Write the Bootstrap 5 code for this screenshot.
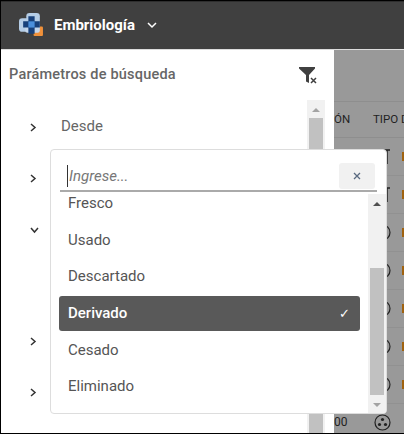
<!DOCTYPE html>
<html lang="es"><head><meta charset="utf-8"><title>Embriología</title>
<link href="https://cdn.jsdelivr.net/npm/bootstrap@5.3.0/dist/css/bootstrap.min.css" rel="stylesheet">
<style>
html,body{margin:0;height:434px;overflow:hidden;background:#fff;font-family:Roboto,"Liberation Sans",sans-serif}
.frame{width:404px;height:434px;border-top:1px solid #000;border-left:1px solid #000;border-bottom:1px solid #000;position:relative;overflow:hidden;display:flex;flex-direction:column}
.topbar{height:49px;background:#404040;flex:none;border-top:1px solid #2e2e2e;border-bottom:1px solid #ddd;padding-left:18px;color:#fff;font-weight:700;font-size:15px}
.topbar .brand{margin-left:10px;margin-right:12px}
.work{flex:1;min-height:0;display:flex}
.side{width:333px;flex:none;background:#fff;position:relative;overflow:hidden}
.side-head{height:50px;padding:0 15px 0 8px;color:#666;font-size:14.500px;font-weight:500;letter-spacing:.2px;margin-top:1px}
.tree{width:306px;flex:none;padding-top:3px}
.tree-row{height:51.300px;color:#666;font-size:15px;padding-left:29px}
.tree-row span{margin-left:24px;position:relative;top:-1px}
.tree-gap{height:59.700px}
.side-scroll{width:18px;background:#f1f1f1;margin-right:9px;display:flex;flex-direction:column;align-items:center;height:333px;margin-top:1px}
.side-thumb{width:14px;flex:1;background:#c1c1c1;margin-top:6px}
.arrow{width:0;height:0;border-left:4px solid transparent;border-right:4px solid transparent}
.arrow-up{border-bottom:4px solid #a3a3a3;margin-top:8px}
.arrow-up-d{border-bottom:4px solid #505050}
.arrow-down{border-top:4px solid #a3a3a3}
.grid-area{flex:1;background:#999;color:#222;font-size:11.500px;overflow:hidden}
.grid-top{height:52px;border-bottom:1px solid #8e8e8e}
.grid-head{height:36px;border-bottom:1px solid #8e8e8e;white-space:nowrap;gap:25px}
.grid-head span:first-child{width:15px}
.grid-head span:last-child{margin-left:-1px}
.grid-row{height:38px;border-bottom:1px solid #919191;padding-left:40px;position:relative}
.last-num{position:absolute;left:0;top:9px;font-size:12px;color:#222}
.dot{position:absolute;left:68px;top:14px;width:2px;height:9px;background:#a0620f}
.picker{position:absolute;left:49px;top:148px;width:337px;height:265px;background:#fff;border:1px solid #ddd;border-radius:4px;display:flex;flex-direction:column;overflow:hidden}
.picker-top{flex:none;height:42px;margin:0 9px;border-bottom:2px solid #aaa;padding:15px 2px 0 7px}
.picker-input{flex:1;border:0;outline:0;padding:0 0 0 1px;font-size:15px;font-style:italic;color:#777;border-left:1px solid #333;height:22px;min-width:0;background:transparent}
.picker-input::placeholder{color:#777;opacity:1}
.picker-clear{width:36px;height:26px;background:#f1f1f1;border:0;border-radius:3px;padding:0;margin-left:6px;margin-top:-2px;color:#555}
.picker-body{flex:1;min-height:0;display:flex}
.opts{flex:1;overflow:hidden;padding:0 8px;min-width:0}
.opt{height:36.670px;font-size:15px;color:#555;padding-left:9px}
.opt:first-child{margin-top:-7px}
.opt.sel{background:#595959;color:#fff;font-weight:500;border-radius:3px;height:35px;margin:.8px 0;padding-right:10px}
.check{font-size:13px}
.pick-scroll{width:18px;background:#f1f1f1;flex:none;display:flex;flex-direction:column;align-items:center;margin-top:2px}
.pick-thumb{width:14px;background:#c1c1c1;flex:1;margin:62px 0 8px}
.arrow-top-gap{margin-top:8px}
.arrow-bottom-gap{margin-bottom:6px}
</style></head><body>
<div class="frame">
<nav class="topbar d-flex align-items-center">
<svg width="25" height="25" viewBox="0 0 24 24"><rect x="14" y="13" width="9" height="9" rx="1" fill="#f0913a"/><rect x="0" y="5" width="14" height="13" rx="3" fill="#b5cde6"/><rect x="7" y="0" width="13" height="14" rx="3" fill="#b5cde6"/><rect x="6" y="9" width="14" height="10" rx="2" fill="#c3d5ea"/><path d="M9 3h6v5h5v6h-5v6H9v-6H4V8h5z" fill="#17407a"/><rect x="9" y="8" width="6" height="6" fill="#4a8fdc"/></svg>
<span class="brand">Embriología</span>
<svg width="10" height="7" viewBox="0 0 10 7"><path d="M1 1l4 4 4-4" fill="none" stroke="#fff" stroke-width="1.500"/></svg>
</nav>
<div class="work">
<aside class="side d-flex flex-column">
<div class="side-head d-flex align-items-center justify-content-between"><span>Parámetros de búsqueda</span>
<svg width="20" height="18" viewBox="0 0 20 18"><path d="M0 1h16v1.500L10 9v8l-3-1.500V9L0 2.500z" fill="#404040"/><path d="M12 12l5 5M17 12l-5 5" stroke="#404040" stroke-width="1.500"/></svg></div>
<div class="d-flex justify-content-between flex-grow-1">
<div class="tree">
<div class="tree-row d-flex align-items-center"><svg width="7" height="9" viewBox="0 0 7 9"><path d="M1 1l4 3.500L1 8" fill="none" stroke="#333" stroke-width="1.500"/></svg><span>Desde</span></div>
<div class="tree-row d-flex align-items-center"><svg width="7" height="9" viewBox="0 0 7 9"><path d="M1 1l4 3.500L1 8" fill="none" stroke="#333" stroke-width="1.500"/></svg></div>
<div class="tree-row d-flex align-items-center"><svg width="9" height="7" viewBox="0 0 9 7"><path d="M1 1l3.500 4L8 1" fill="none" stroke="#333" stroke-width="1.500"/></svg></div>
<div class="tree-row tree-gap"></div>
<div class="tree-row d-flex align-items-center"><svg width="7" height="9" viewBox="0 0 7 9"><path d="M1 1l4 3.500L1 8" fill="none" stroke="#333" stroke-width="1.500"/></svg></div>
<div class="tree-row d-flex align-items-center"><svg width="7" height="9" viewBox="0 0 7 9"><path d="M1 1l4 3.500L1 8" fill="none" stroke="#333" stroke-width="1.500"/></svg></div>
</div>
<div class="side-scroll"><div class="arrow arrow-up"></div><div class="side-thumb"></div></div>
</div>
</aside>
<main class="grid-area">
<div class="grid-top"></div>
<div class="grid-head d-flex align-items-center"><span>ÓN</span><span>TIPO DE</span></div>
<div class="grid-row d-flex align-items-center"><svg width="17" height="17" viewBox="0 0 17 17"><path d="M3 2h13M13 2v14" fill="none" stroke="#222" stroke-width="1.500"/></svg><i class="dot"></i></div>
<div class="grid-row d-flex align-items-center"><svg width="17" height="17" viewBox="0 0 17 17"><path d="M3 2h13M13 2v14" fill="none" stroke="#222" stroke-width="1.500"/></svg><i class="dot"></i></div>
<div class="grid-row d-flex align-items-center"><svg width="17" height="17" viewBox="0 0 17 17"><circle cx="8.500" cy="8.500" r="7.500" fill="none" stroke="#222" stroke-width="1.200"/></svg><i class="dot"></i></div>
<div class="grid-row d-flex align-items-center"><svg width="17" height="17" viewBox="0 0 17 17"><circle cx="8.500" cy="8.500" r="7.500" fill="none" stroke="#222" stroke-width="1.200"/></svg><i class="dot"></i></div>
<div class="grid-row d-flex align-items-center"><svg width="17" height="17" viewBox="0 0 17 17"><circle cx="8.500" cy="8.500" r="7.500" fill="none" stroke="#222" stroke-width="1.200"/></svg><i class="dot"></i></div>
<div class="grid-row d-flex align-items-center"><svg width="17" height="17" viewBox="0 0 17 17"><circle cx="8.500" cy="8.500" r="7.500" fill="none" stroke="#222" stroke-width="1.200"/></svg><i class="dot"></i></div>
<div class="grid-row d-flex align-items-center"><svg width="17" height="17" viewBox="0 0 17 17"><circle cx="8.500" cy="8.500" r="7.500" fill="none" stroke="#222" stroke-width="1.200"/></svg><i class="dot"></i></div>
<div class="grid-row d-flex align-items-center"><span class="last-num">00</span>
<svg width="17" height="17" viewBox="0 0 17 17"><circle cx="8.500" cy="8.500" r="7.500" fill="none" stroke="#222" stroke-width="1.200"/><circle cx="8.500" cy="5.500" r="1.600" fill="#222"/><circle cx="5.500" cy="10.500" r="1.600" fill="#222"/><circle cx="11.500" cy="10.500" r="1.600" fill="#222"/></svg></div>
</main>
</div>
<div class="picker">
<div class="picker-top d-flex align-items-start"><input class="picker-input" placeholder="Ingrese..." aria-label="Ingrese"><button class="picker-clear d-flex align-items-center justify-content-center" aria-label="Limpiar"><svg width="8" height="8" viewBox="0 0 8 8"><path d="M1 1l6 6M7 1L1 7" stroke="#5a6a80" stroke-width="1.300"/></svg></button></div>
<div class="picker-body">
<div class="opts">
<div class="opt d-flex align-items-center">Fresco</div>
<div class="opt d-flex align-items-center">Usado</div>
<div class="opt d-flex align-items-center">Descartado</div>
<div class="opt sel d-flex align-items-center justify-content-between"><span>Derivado</span><span class="check">✓</span></div>
<div class="opt d-flex align-items-center">Cesado</div>
<div class="opt d-flex align-items-center">Eliminado</div>
</div>
<div class="pick-scroll"><div class="arrow arrow-up-d arrow-top-gap"></div><div class="pick-thumb"></div><div class="arrow arrow-down arrow-bottom-gap"></div></div>
</div>
</div>
</div>
</body></html>
